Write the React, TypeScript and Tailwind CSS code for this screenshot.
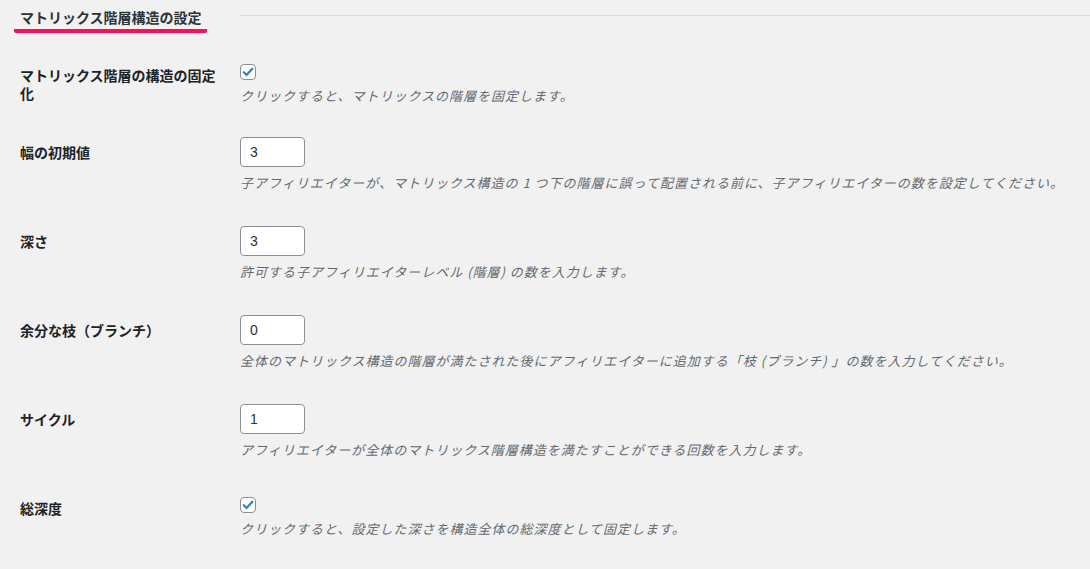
import React from 'react';

const FONT = { fontFamily: '"Noto Sans CJK JP", "Noto Sans", sans-serif' };

type Row =
  | { label: string; kind: 'check'; desc: string }
  | { label: string; kind: 'number'; value: string; desc: string };

const rows: Row[] = [
  { label: 'マトリックス階層の構造の固定化', kind: 'check', desc: 'クリックすると、マトリックスの階層を固定します。' },
  {
    label: '幅の初期値',
    kind: 'number',
    value: '3',
    desc: '子アフィリエイターが、マトリックス構造の 1 つ下の階層に誤って配置される前に、子アフィリエイターの数を設定してください。',
  },
  { label: '深さ', kind: 'number', value: '3', desc: '許可する子アフィリエイターレベル (階層) の数を入力します。' },
  {
    label: '余分な枝（ブランチ）',
    kind: 'number',
    value: '0',
    desc: '全体のマトリックス構造の階層が満たされた後にアフィリエイターに追加する「枝 (ブランチ) 」の数を入力してください。',
  },
  { label: 'サイクル', kind: 'number', value: '1', desc: 'アフィリエイターが全体のマトリックス階層構造を満たすことができる回数を入力します。' },
  { label: '総深度', kind: 'check', desc: 'クリックすると、設定した深さを構造全体の総深度として固定します。' },
];

function Checkbox() {
  return (
    <span className="flex h-4 w-4 items-center justify-center rounded-[4px] border border-[#8c8f94] bg-white">
      <svg viewBox="0 0 20 20" className="h-[16px] w-[16px]">
        <path d="M4 10.4l3.9 3.9 8.3-9" fill="none" stroke="#2b84c6" strokeWidth="3.2" strokeLinecap="round" strokeLinejoin="round" />
      </svg>
    </span>
  );
}

export default function App() {
  return (
    <div className="min-h-[569px] w-full bg-[#f1f1f1] text-[#1d2327]" style={FONT}>
      {/* section tab heading */}
      <div className="flex items-start pl-[14px]">
        <div className="w-[193px] whitespace-nowrap rounded-[2px] border-b-[4px] border-[#f70f5a] px-[6px] pt-[8px] pb-[3px] text-[14px] font-bold leading-[18px] text-[#2c3338]">
          マトリックス階層構造の設定
        </div>
        <div className="ml-[33px] mt-[15px] h-px flex-1 bg-[#dcdcde]" />
      </div>

      <div className="mt-[13px] pl-[20px]">
        {rows.map((r) => (
          <div key={r.label} className="flex items-start">
            <div className="w-[210px] shrink-0 pt-[20px] pb-[20px] pr-[10px] text-[14px] font-bold leading-[18px]">
              {r.label}
            </div>
            <div className={r.kind === 'check' ? 'pl-[10px] pt-[18px] pb-[17px]' : 'pl-[10px] pt-[14px] pb-[19px]'}>
              {r.kind === 'check' ? (
                <Checkbox />
              ) : (
                <div
                  className="flex h-[30px] w-[65px] items-center rounded-[4px] border border-[#8c8f94] bg-white pl-[9px] text-[14px] text-[#2c3338]"
                  style={{ fontFamily: '"Liberation Sans", Arial, sans-serif' }}
                >
                  {r.value}
                </div>
              )}
              <p className="mt-[6px] whitespace-nowrap text-[13px] italic leading-[20px] tracking-[1px] text-[#646970]">
                {r.desc}
              </p>
            </div>
          </div>
        ))}
      </div>
    </div>
  );
}
